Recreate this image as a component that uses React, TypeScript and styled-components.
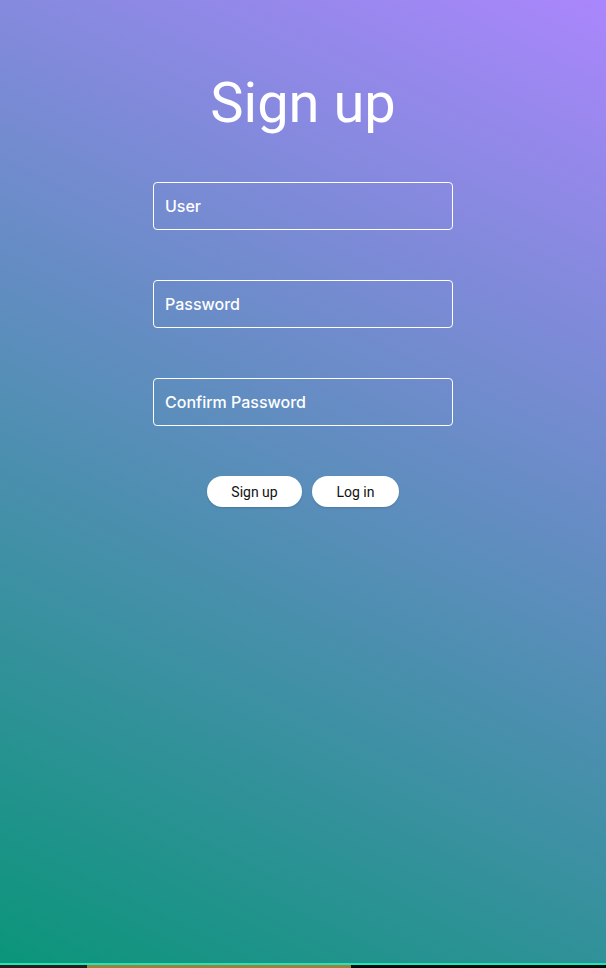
import React from "react";
import styled, { createGlobalStyle } from "styled-components";

const Global = createGlobalStyle`
  html, body { margin: 0; padding: 0; background: #000; }
  body { font-family: Roboto, "Liberation Sans", sans-serif; overflow: hidden; }
  * { box-sizing: border-box; }
`;

const Page = styled.div`
  width: 606px;
  height: 968px;
  display: flex;
  flex-direction: column;
`;

const Main = styled.main`
  height: 963px;
  background: linear-gradient(26deg, #0b957a 0%, #aa86fc 100%);
  display: flex;
  flex-direction: column;
  align-items: center;
  padding-top: 71px;
`;

const Title = styled.h1`
  margin: 0;
  font-size: 56px;
  line-height: 64px;
  font-weight: 400;
  color: #fff;
`;

const Form = styled.form`
  margin-top: 47px;
  display: flex;
  flex-direction: column;
  align-items: center;
  gap: 50px;
`;

const Field = styled.input`
  width: 300px;
  height: 48px;
  border: 1px solid #fff;
  border-radius: 4px;
  background: transparent;
  padding: 0 11px;
  font-family: Inter, Roboto, "Liberation Sans", sans-serif;
  font-size: 16px;
  font-weight: 500;
  color: #fff;
  outline: none;
  &::placeholder { color: #fff; opacity: 1; }
`;

const Actions = styled.div`
  display: flex;
  gap: 10px;
`;

const Pill = styled.button<{ $w: number }>`
  width: ${(p) => p.$w}px;
  height: 31px;
  border: none;
  border-radius: 16px;
  background: #fff;
  color: #111;
  font-family: Roboto, "Liberation Sans", sans-serif;
  font-size: 14px;
  font-weight: 400;
  box-shadow: 0 1px 2px rgba(0, 0, 0, 0.15);
  cursor: pointer;
`;

const Footer = styled.footer`
  height: 5px;
  display: flex;
  flex-direction: column;
`;

const Line = styled.div`
  height: 2px;
  background: #1de9b6;
`;

const Strip = styled.div`
  height: 3px;
  display: grid;
  grid-template-columns: 87px 264px 1fr;
  background: #0a0a0a;
`;

const Seg = styled.div<{ $c: string }>`
  background: ${(p) => p.$c};
`;

export default function App() {
  return (
    <>
      <Global />
      <Page>
        <Main>
          <Title>Sign up</Title>
          <Form onSubmit={(e) => e.preventDefault()}>
            <Field placeholder="User" />
            <Field placeholder="Password" type="password" />
            <Field placeholder="Confirm Password" type="password" />
            <Actions>
              <Pill $w={95} type="submit">Sign up</Pill>
              <Pill $w={87} type="button">Log in</Pill>
            </Actions>
          </Form>
        </Main>
        <Footer>
          <Line />
          <Strip>
            <Seg $c="#2b1a1c" />
            <Seg $c="#a27d3e" />
            <Seg $c="#0a0a0a" />
          </Strip>
        </Footer>
      </Page>
    </>
  );
}
